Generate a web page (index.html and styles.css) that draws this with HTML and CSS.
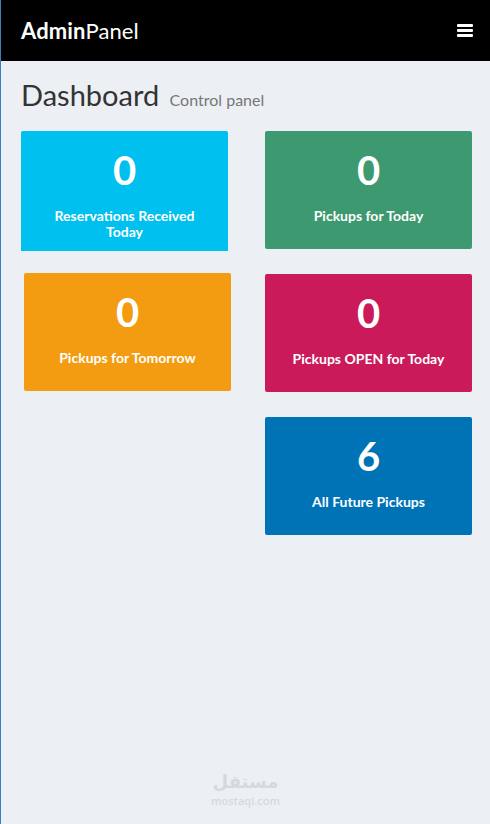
FILE: index.html
```html
<!DOCTYPE html>
<html lang="en">
<head>
    <meta charset="UTF-8">
    <meta name="viewport" content="width=device-width, initial-scale=1.0">
    <title>AdminPanel | Dashboard</title>
    <link rel="stylesheet" href="styles.css">
</head>
<body>
    <header class="topbar">
        <a href="#" class="logo"><b>Admin</b>Panel</a>
        <button class="menu-toggle" aria-label="Toggle navigation">
            <span></span><span></span><span></span>
        </button>
    </header>

    <div class="content">
        <h1>Dashboard <small>Control panel</small></h1>

        <div class="boxes">
            <div class="box bg-aqua box-tall">
                <h3>0</h3>
                <p>Reservations Received Today</p>
            </div>
            <div class="box bg-olive">
                <h3>0</h3>
                <p>Pickups for Today</p>
            </div>
            <div class="box bg-orange box-shift">
                <h3>0</h3>
                <p>Pickups for Tomorrow</p>
            </div>
            <div class="box bg-maroon box-down">
                <h3>0</h3>
                <p>Pickups OPEN for Today</p>
            </div>
            <div class="box bg-blue box-last">
                <h3>6</h3>
                <p>All Future Pickups</p>
            </div>
        </div>
    </div>

    <div class="watermark">
        <span class="wm-ar" lang="ar">مستقل</span>
        <span class="wm-en">mostaql.com</span>
    </div>
</body>
</html>
```

FILE: styles.css
```css
html {
    height: 100%;
}
body {
    margin: 0;
    min-height: 100%;
    background-color: #ecf0f5;
    font-family: Lato, "Open Sans", Arial, sans-serif;
    color: #333333;
    border-left: 1px solid #3c7dbd;
    box-sizing: border-box;
    position: relative;
}
.topbar {
    height: 61px;
    background-color: #000000;
    display: flex;
    align-items: center;
    justify-content: space-between;
    padding: 0 17px 0 20px;
}
.logo {
    color: #ffffff;
    text-decoration: none;
    font-size: 22px;
    letter-spacing: 0.1px;
}
.logo b {
    font-weight: 700;
}
.menu-toggle {
    background: none;
    border: none;
    padding: 0;
    width: 16px;
    display: flex;
    flex-direction: column;
    gap: 2px;
    cursor: pointer;
}
.menu-toggle span {
    display: block;
    height: 3px;
    background-color: #ffffff;
    border-radius: 1px;
}
.content {
    padding: 17px 18px 0 20px;
}
h1 {
    margin: 0;
    font-size: 29px;
    font-weight: 400;
    line-height: 34px;
    color: #333333;
}
h1 small {
    font-size: 16px;
    color: #777777;
    margin-left: 3px;
}
.boxes {
    margin-top: 14px;
    display: grid;
    grid-template-columns: 207px 207px;
    column-gap: 37px;
    row-gap: 22px;
    align-items: start;
}
.box {
    height: 118px;
    box-sizing: border-box;
    border-radius: 2px;
    color: #ffffff;
    text-align: center;
    padding: 17px 20px 0;
}
.box h3 {
    margin: 0;
    font-size: 40px;
    line-height: 44px;
    font-weight: 700;
}
.box p {
    margin: 16px 0 0;
    font-size: 14px;
    line-height: 16px;
    font-weight: 700;
}
.box-tall {
    height: 120px;
    border-radius: 2px 2px 0 0;
}
.box-shift {
    width: 207px;
    margin-left: 3px;
}
.box-down {
    margin-top: 1px;
}
.box-last {
    grid-column: 2;
    margin-top: 3px;
}
.bg-aqua {
    background-color: #00c0ef;
}
.bg-olive {
    background-color: #3d9970;
}
.bg-orange {
    background-color: #f39c12;
}
.bg-maroon {
    background-color: #ca1a5a;
}
.bg-blue {
    background-color: #0073b7;
}
.watermark {
    position: absolute;
    left: 0;
    right: 0;
    bottom: 17px;
    display: flex;
    flex-direction: column;
    align-items: center;
    gap: 3px;
    color: #d5d9df;
}
.wm-ar {
    font-family: "DejaVu Sans", sans-serif;
    font-size: 18px;
    line-height: 20px;
    font-weight: 700;
}
.wm-en {
    font-family: "Open Sans", sans-serif;
    font-size: 11px;
    line-height: 12px;
    font-weight: 600;
}
```
